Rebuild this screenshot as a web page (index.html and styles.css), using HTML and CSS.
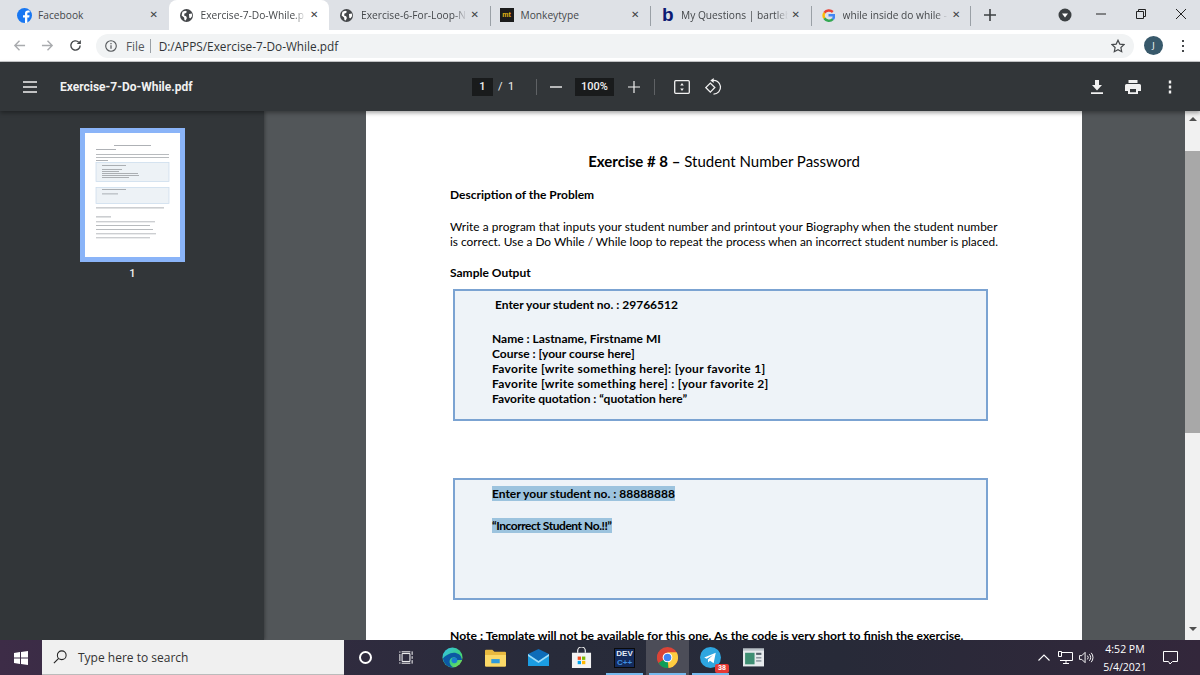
FILE: index.html
```html
<!DOCTYPE html>
<html lang="en">
<head>
  <meta charset="UTF-8">
  <title>Exercise-7-Do-While.pdf</title>
  <link rel="stylesheet" href="styles.css">
</head>
<body>
  <div class="tabstrip">
    <div class="tab">
      <svg class="fav fav-fb" viewBox="0 0 16 16"><circle cx="8" cy="8" r="8" fill="#1877f2"/><path d="M11 16V10h2l.4-2.4H11V6.200c0-.8.3-1.300 1.300-1.300h1.200V2.800c-.5-.1-1.200-.2-1.900-.2-1.900 0-3.100 1.100-3.100 3.200v1.800H6.400V10h2.100v6z" fill="#fff"/></svg>
      <span class="tab-title tab-title-full">Facebook</span>
      <span class="tab-x">&#10005;</span>
    </div>
    <div class="tab tab-active">
      <svg class="fav" viewBox="0 0 16 16"><use href="#globe"/></svg>
      <span class="tab-title">Exercise-7-Do-While.p</span>
      <span class="tab-x">&#10005;</span>
    </div>
    <div class="tab">
      <svg class="fav" viewBox="0 0 16 16"><use href="#globe"/></svg>
      <span class="tab-title">Exercise-6-For-Loop-N</span>
      <span class="tab-x">&#10005;</span>
    </div>
    <div class="tab tab-sep">
      <span class="fav-mt">mt</span>
      <span class="tab-title tab-title-full">Monkeytype</span>
      <span class="tab-x">&#10005;</span>
    </div>
    <div class="tab tab-sep">
      <span class="fav-b">b</span>
      <span class="tab-title">My Questions | bartleb</span>
      <span class="tab-x">&#10005;</span>
    </div>
    <div class="tab tab-sep tab-last">
      <svg class="fav" viewBox="0 0 16 16" fill="none" stroke-width="3">
        <path d="M13.300 3.700A7 6.800 0 0 0 2.900 4.600" stroke="#ea4335"/>
        <path d="M2.900 4.600a6.800 6.800 0 0 0 0 6.800" stroke="#fbbc05"/>
        <path d="M2.900 11.400a6.800 6.800 0 0 0 10.500 1.100" stroke="#34a853"/>
        <path d="M13.400 12.500A6.800 6.800 0 0 0 14.800 7.800H8" stroke="#4285f4"/>
      </svg>
      <span class="tab-title">while inside do while -</span>
      <span class="tab-x">&#10005;</span>
    </div>
    <svg class="newtab" viewBox="0 0 12 12"><path d="M6 0v12M0 6h12" stroke="#3c4043" stroke-width="1.600"/></svg>
    <svg class="tabsearch" viewBox="0 0 14 14"><circle cx="7" cy="7" r="6.500" fill="#3c4043"/><path d="M4 5.500h6L7 9.500z" fill="#fff"/></svg>
    <div class="winctl">
      <svg viewBox="0 0 10 10"><path d="M0 5h10" stroke="#222"/></svg>
      <svg viewBox="0 0 10 10" fill="none" stroke="#222"><path d="M.5 2.500h7v7h-7zM2.500 2.500v-2h7v7h-2"/></svg>
      <svg viewBox="0 0 10 10"><path d="M0 0l10 10M10 0L0 10" stroke="#222"/></svg>
    </div>
  </div>

  <div class="toolbar">
    <svg class="nav nav-off" viewBox="0 0 14 14"><path d="M13 7H2M7 2L2 7l5 5" fill="none" stroke="#a9abae" stroke-width="1.500"/></svg>
    <svg class="nav nav-off" viewBox="0 0 14 14"><path d="M1 7h11M7 2l5 5-5 5" fill="none" stroke="#a9abae" stroke-width="1.500"/></svg>
    <svg class="nav" viewBox="0 0 14 14"><path d="M12 7a5 5 0 1 1-1.500-3.600" fill="none" stroke="#45484b" stroke-width="1.500"/><path d="M12.800 1v4.500H8.300z" fill="#45484b"/></svg>
    <div class="omnibox">
      <svg class="info" viewBox="0 0 12 12"><circle cx="6" cy="6" r="5.300" fill="none" stroke="#55585b" stroke-width="1.100"/><path d="M6 5.200v3.600M6 3v1.200" stroke="#55585b" stroke-width="1.200"/></svg>
      <span class="scheme">File</span>
      <span class="url">D:/APPS/Exercise-7-Do-While.pdf</span>
      <svg class="star" viewBox="0 0 14 14"><path d="M7 1.200l1.800 3.900 4.200.5-3.100 2.900.8 4.200L7 10.700l-3.700 2 .8-4.200L1 5.600l4.200-.5z" fill="none" stroke="#45484b" stroke-width="1.200"/></svg>
    </div>
    <span class="avatar">J</span>
    <svg class="menu-dots" viewBox="0 0 4 14"><path d="M2 1v2M2 6v2M2 11v2" stroke="#45484b" stroke-width="2"/></svg>
  </div>

  <div class="pdfbar">
    <svg class="hamburger" viewBox="0 0 14 12"><path d="M0 1h14M0 6h14M0 11h14" stroke="#f1f1f1" stroke-width="1.500"/></svg>
    <span class="filename">Exercise-7-Do-While.pdf</span>
    <div class="pagectl">
      <span class="field field-page">1</span>
      <span class="pagecount">/ &nbsp;1</span>
      <span class="vsep vsep-a"></span>
      <svg class="zoom-btn zoom-minus" viewBox="0 0 12 12"><path d="M0 6h12" stroke="#f1f1f1" stroke-width="1.400"/></svg>
      <span class="field field-zoom">100%</span>
      <svg class="zoom-btn zoom-plus" viewBox="0 0 12 12"><path d="M0 6h12M6 0v12" stroke="#f1f1f1" stroke-width="1.200"/></svg>
      <span class="vsep vsep-b"></span>
      <svg class="fit" viewBox="0 0 16 14"><rect x=".7" y=".7" width="14.600" height="12.600" rx="1" fill="none" stroke="#f1f1f1" stroke-width="1.300"/><path d="M8 3l1.800 2.500H6.200zM8 11L6.200 8.500h3.600z" fill="#f1f1f1"/></svg>
      <svg class="rotate" viewBox="0 0 16 16"><rect x="2" y="6" width="6" height="6" transform="rotate(45 5 9)" fill="none" stroke="#f1f1f1" stroke-width="1.200"/><path d="M6.500 2.400a6.500 6.500 0 1 1 1.500 12.800" fill="none" stroke="#f1f1f1" stroke-width="1.200"/><path d="M8.200 0v4.800L5 2.400z" fill="#f1f1f1"/></svg>
    </div>
    <div class="pdfactions">
      <svg viewBox="0 0 12 14"><path d="M4 0h4v5h3L6 10.500 1 5h3zM0 12.300h12V14H0z" fill="#f1f1f1"/></svg>
      <svg viewBox="0 0 16 14"><path d="M3.500 0h9v3h-9zM1.500 4h13A1.500 1.500 0 0 1 16 5.500V11h-3v3H3v-3H0V5.500A1.500 1.500 0 0 1 1.500 4zM5 9v3.200h6V9z" fill="#f1f1f1"/></svg>
      <svg viewBox="0 0 4 14"><path d="M2 .5v3M2 5.500v3M2 10.500v3" stroke="#f1f1f1" stroke-width="2.400"/></svg>
    </div>
  </div>

  <div class="viewer">
    <aside class="sidebar">
      <div class="thumb">
        <svg viewBox="0 0 95 123">
          <rect x="11" y="29" width="73" height="19" fill="#edf2f6" stroke="#c8daec" stroke-width=".7"/>
          <rect x="11" y="54" width="73" height="16" fill="#edf2f6" stroke="#c8daec" stroke-width=".7"/>
          <g fill="#9a9ea3">
            <rect x="29" y="11.700" width="37" height=".8"/>
            <rect x="11" y="15.700" width="20" height=".8"/>
            <rect x="11" y="20.700" width="73" height=".7"/>
            <rect x="11" y="23.700" width="73" height=".7"/>
            <rect x="11" y="26.700" width="12" height=".8"/>
            <rect x="17" y="31.700" width="24" height=".8"/>
            <rect x="17" y="35.500" width="20" height=".8"/>
            <rect x="17" y="37.500" width="17" height=".8"/>
            <rect x="17" y="39.500" width="36" height=".8"/>
            <rect x="17" y="41.500" width="37" height=".8"/>
            <rect x="17" y="43.500" width="27" height=".8"/>
            <rect x="17" y="55.700" width="24" height=".8"/>
            <rect x="17" y="60" width="16" height=".8"/>
            <rect x="11" y="74" width="68" height=".8"/>
            <rect x="11" y="83" width="15" height=".8"/>
            <rect x="11" y="88" width="59" height=".7"/>
            <rect x="11" y="91.500" width="54" height=".7"/>
            <rect x="11" y="95.500" width="57" height=".7"/>
            <rect x="11" y="100" width="60" height=".7"/>
            <rect x="11" y="104" width="54" height=".7"/>
          </g>
        </svg>
      </div>
      <span class="thumb-num">1</span>
    </aside>

    <main class="stage">
      <div class="page">
        <h1 class="doc-title"><b>Exercise # 8 &ndash;</b> Student Number Password</h1>
        <h2 class="doc-head doc-head-first">Description of the Problem</h2>
        <p class="doc-para"><span class="para-first">Write a program that inputs your student number and printout your Biography when the student number</span><br>is correct. Use a Do While / While loop to repeat the process when an incorrect student number is placed.</p>
        <h2 class="doc-head doc-head-sample">Sample Output</h2>
        <div class="console console-ok">
          <p class="prompt">Enter your student no. : 29766512</p>
          <p class="bio">Name : Lastname, Firstname MI<br>Course : [your course here]<br><span class="wide">Favorite [write something here]: [your favorite 1]</span><br><span class="wide">Favorite [write something here] : [your favorite 2]</span><br>Favorite quotation : &ldquo;quotation here&rdquo;</p>
        </div>
        <div class="console console-bad">
          <p class="prompt-bad"><span class="sel">Enter your student no. : 88888888</span></p>
          <p class="wrong"><span class="sel">&ldquo;Incorrect Student No.!!&rdquo;</span></p>
        </div>
        <p class="doc-note">Note : Template will not be available for this one. As the code is very short to finish the exercise.</p>
      </div>
    </main>

    <div class="scrollbar">
      <span class="arrow-up"></span>
      <span class="scroll-thumb"></span>
      <span class="arrow-down"></span>
    </div>
  </div>

  <div class="taskbar">
    <svg class="startlogo" viewBox="0 0 14 14"><path d="M0 2l6-.9V6.600H0zM7 1l7-1v6.600H7zM0 7.400h6V13l-6-.9zM7 7.400h7V14l-7-1z" fill="#fff"/></svg>
    <div class="searchbox">
      <svg viewBox="0 0 16 16"><circle cx="10" cy="6" r="5" fill="none" stroke="#222" stroke-width="1.200"/><path d="M6.500 9.500L1 15" stroke="#222" stroke-width="1.300"/></svg>
      <span>Type here to search</span>
    </div>
    <span class="cortana"></span>
    <svg class="taskview" viewBox="0 0 16 14"><path d="M3.500 2.500h9v9h-9zM1 0v1.500M1 3v8M1 12.500V14M15 0v4M15 5.500v3M15 10v4M3 .5h10M3 13.500h10" fill="none" stroke="#fff" stroke-width="1.100"/></svg>
    <div class="apps">
      <div class="app">
        <svg viewBox="0 0 22 22"><defs><linearGradient id="edgeg" x1="0" y1="0" x2="1" y2="1"><stop offset="0" stop-color="#35c1f1"/><stop offset=".6" stop-color="#3bd07e"/><stop offset="1" stop-color="#8ee04a"/></linearGradient></defs><circle cx="11" cy="11" r="10.500" fill="url(#edgeg)"/><path d="M1 12C2 19 8 22 13 21.500 8.500 20 7 16 8.500 13c1.500-3 7-3.500 7 .5h5.500C20 6 13 5 9 6.500 5 8 2.500 10 1 12z" fill="#0c59a4"/><circle cx="13" cy="14" r="3" fill="#1a7fd0"/></svg>
      </div>
      <div class="app">
        <svg viewBox="0 0 20 17"><path d="M0 2a1 1 0 0 1 1-1h6l2 2h10a1 1 0 0 1 1 1v12a1 1 0 0 1-1 1H1a1 1 0 0 1-1-1z" fill="#e8b93f"/><path d="M0 6h20v10a1 1 0 0 1-1 1H1a1 1 0 0 1-1-1z" fill="#fbd968"/><rect x="6" y="10" width="8" height="4" fill="#2f9bdc"/></svg>
      </div>
      <div class="app">
        <svg viewBox="0 0 21 17"><path d="M0 5h21v12H0z" fill="#1b9de2"/><path d="M0 5l10.500-5L21 5l-10.500 7z" fill="#0e6cb8"/><path d="M0 5l10.500 7L21 5v2l-10.500 7L0 7z" fill="#9fdcf8"/></svg>
      </div>
      <div class="app">
        <svg viewBox="0 0 20 22"><path d="M6 6V4a4 4 0 0 1 8 0v2" fill="none" stroke="#eee" stroke-width="1.300"/><path d="M0 6h20v16H0z" fill="#f3f3f3"/><path d="M6 10h3.500v3.500H6z" fill="#f25022"/><path d="M10.500 10H14v3.500h-3.500z" fill="#7fba00"/><path d="M6 14.500h3.500V18H6z" fill="#00a4ef"/><path d="M10.500 14.500H14V18h-3.500z" fill="#ffb900"/></svg>
      </div>
      <div class="app app-dev"><span class="dev-logo">DEV<br><i>C++</i></span></div>
      <div class="app app-active">
        <svg viewBox="0 0 20 20"><circle cx="10" cy="10" r="10" fill="#db4437"/><path d="M10 10L1.300 15a10 10 0 0 0 9.700 4.900z" fill="#0f9d58"/><path d="M10 10l1 10a10 10 0 0 0 7.700-15H10z" fill="#ffcd40"/><path d="M1.300 15A10 10 0 0 1 1.700 4.500L10 10z" fill="#db4437"/><circle cx="10" cy="10" r="4.600" fill="#fff"/><circle cx="10" cy="10" r="3.600" fill="#4285f4"/></svg>
      </div>
      <div class="app app-tg">
        <svg viewBox="0 0 20 20"><circle cx="10" cy="10" r="10" fill="#2ea6e0"/><path d="M4 10l11-4.500-2 10-3.500-2.500-1.800 1.800-.2-3 5-4.300-6.200 3.800z" fill="#fff"/></svg>
        <span class="badge">38</span>
      </div>
      <div class="app">
        <svg viewBox="0 0 20 17"><rect width="20" height="17" fill="#e6eaec"/><rect y="0" width="20" height="2" fill="#b9c2c8"/><rect x="2" y="4" width="9" height="11" fill="#3f8f73"/><rect x="12.500" y="4" width="5" height="2" fill="#55626b"/><rect x="12.500" y="8" width="5" height="1.500" fill="#8f9aa2"/><rect x="12.500" y="11" width="5" height="1.500" fill="#8f9aa2"/></svg>
      </div>
    </div>
    <div class="tray">
      <svg class="tray-chev" viewBox="0 0 12 7"><path d="M.5 6.500L6 1l5.500 5.500" fill="none" stroke="#fff" stroke-width="1.100"/></svg>
      <svg class="tray-net" viewBox="0 0 15 13"><path d="M4 1.500h10.500v8H2M8 9.500V12.500M5 12.500h6M.5.500h3v5h-3z" fill="none" stroke="#fff"/></svg>
      <svg class="tray-vol" viewBox="0 0 16 13"><path d="M.5 4.500h2.500L6.500 1v11L3 8.500H.5z" fill="none" stroke="#fff"/><path d="M9 4.500a3 3 0 0 1 0 4M11 3a5 5 0 0 1 0 7M13 1.500a7.500 7.500 0 0 1 0 10" fill="none" stroke="#fff"/></svg>
      <div class="clock">4:52 PM<br>5/4/2021</div>
      <svg class="tray-note" viewBox="0 0 15 14"><path d="M.5.500h14v10H9.500L7 13l-1.500-2.500h-5z" fill="none" stroke="#fff"/></svg>
    </div>
  </div>

  <svg class="defs" width="0" height="0">
    <symbol id="globe" viewBox="0 0 16 16">
      <circle cx="8" cy="8" r="8" fill="#45484b"/>
      <path d="M3 3.500l3.500-1.500 2 1-1 2-2 .5-.5 2.500 2.500 1 1 2-1.500 3-1.500-.5-.5-3L2 8zM11 6l3.500-.5.500 3-2 3-1.500-.5z" fill="#fff"/>
    </symbol>
  </svg>
</body>
</html>
```

FILE: styles.css
```css
* {
  box-sizing: border-box;
}
html, body {
  margin: 0;
  height: 675px;
  overflow: hidden;
}
body {
  font-family: "Open Sans", Arial, sans-serif;
  display: flex;
  flex-direction: column;
  background: #323639;
}
svg {
  flex: none;
  display: block;
}
.defs {
  position: absolute;
}

/* tabs */
.tabstrip {
  height: 30px;
  background: #dee1e6;
  display: flex;
  align-items: center;
  padding-left: 8px;
}
.tab {
  width: 160.5px;
  height: 30px;
  display: flex;
  align-items: center;
  padding: 0 9px;
  font-size: 10.2px;
  color: #45484b;
  position: relative;
}
.tab-active {
  background: #fff;
  border-radius: 8px 8px 0 0;
}
.tab-sep::before {
  content: "";
  position: absolute;
  left: 0;
  top: 6px;
  height: 20px;
  width: 1px;
  background: #9aa0a6;
}
.tab-last::after {
  content: "";
  position: absolute;
  right: 0;
  top: 6px;
  height: 20px;
  width: 1px;
  background: #9aa0a6;
}
.fav {
  width: 13px;
  height: 13px;
  margin-right: 8px;
  margin-left: 2px;
}
.fav-fb {
  width: 15px;
  height: 15px;
  margin-left: 0;
  margin-right: 6px;
}
.fav-mt {
  width: 14px;
  height: 14px;
  margin-left: 1px;
  margin-right: 7px;
  background: #1c1c1c;
  color: #e2b714;
  font: bold 7px/14px "Liberation Sans", sans-serif;
  text-align: center;
  flex: none;
}
.fav-b {
  width: 12px;
  margin-left: 3px;
  margin-right: 7px;
  color: #0c1a73;
  font: bold 19px/20px "Liberation Sans", sans-serif;
  flex: none;
}
.tab-title {
  flex: 1;
  min-width: 0;
  white-space: nowrap;
  -webkit-mask-image: linear-gradient(to right, #000 88%, transparent 100%);
  mask-image: linear-gradient(to right, #000 88%, transparent 100%);
}
.tab-title-full {
  -webkit-mask-image: none;
  mask-image: none;
}
.tab-x {
  width: 10px;
  margin-left: 4px;
  font: bold 10px/10px "DejaVu Sans", sans-serif;
  color: #3c4043;
  flex: none;
}
.newtab {
  width: 12px;
  height: 12px;
  margin-left: 13px;
}
.tabsearch {
  width: 14px;
  height: 14px;
  margin-left: 62px;
}
.winctl {
  display: flex;
  gap: 30px;
  margin-left: 24px;
  margin-top: -2px;
}
.winctl svg {
  width: 10px;
  height: 10px;
}

/* address bar */
.toolbar {
  height: 32px;
  background: #fff;
  display: flex;
  align-items: center;
  padding-left: 13px;
  border-bottom: 1px solid #c8c9cb;
}
.nav {
  width: 13px;
  height: 13px;
  margin-right: 15px;
}
.omnibox {
  width: 1038px;
  height: 24px;
  margin-left: -1px;
  border-radius: 12px;
  background: #f1f3f4;
  display: flex;
  align-items: center;
  padding-left: 9px;
  font-size: 11.8px;
  color: #303336;
}
.info {
  width: 12px;
  height: 12px;
  margin-right: 9px;
}
.scheme {
  color: #55585b;
  padding-right: 5px;
  margin-right: 8px;
  border-right: 1px solid #9aa0a6;
  line-height: 14px;
}
.url {
  flex: 1;
}
.star {
  width: 14px;
  height: 14px;
  margin-right: 9px;
}
.avatar {
  width: 19px;
  height: 19px;
  margin-left: 10px;
  border-radius: 50%;
  background: #38596b;
  color: #fff;
  font-size: 9px;
  line-height: 19px;
  text-align: center;
}
.menu-dots {
  width: 4px;
  height: 14px;
  margin-left: 18px;
}

/* pdf toolbar */
.pdfbar {
  height: 49px;
  background: #323639;
  display: flex;
  align-items: center;
  padding-left: 23px;
  color: #f1f1f1;
  font-family: Roboto, Arial, sans-serif;
  box-shadow: 0 2px 4px rgba(0, 0, 0, 0.35);
  position: relative;
  z-index: 2;
}
.hamburger {
  width: 14px;
  height: 12px;
  margin-right: 23px;
}
.filename {
  width: 412px;
  font-size: 12px;
  font-weight: 700;
}
.pagectl {
  display: flex;
  align-items: center;
  font-size: 11px;
}
.field {
  height: 18px;
  line-height: 18px;
  text-align: center;
  background: #191b1c;
  font-weight: 500;
}
.field-page {
  width: 21px;
}
.field-zoom {
  width: 39px;
}
.pagecount {
  margin-left: 5px;
  width: 20px;
  white-space: nowrap;
}
.vsep {
  width: 1px;
  height: 16px;
  background: #5f6265;
}
.vsep-a {
  margin-left: 18px;
}
.vsep-b {
  margin-left: 14px;
}
.zoom-btn {
  width: 12px;
  height: 12px;
}
.zoom-minus {
  margin: 0 13px;
}
.zoom-plus {
  margin-left: 14px;
}
.fit {
  width: 16px;
  height: 14px;
  margin-left: 19px;
}
.rotate {
  width: 17px;
  height: 17px;
  margin-left: 15px;
}
.pdfactions {
  display: flex;
  align-items: center;
  margin-left: auto;
  margin-right: 28px;
}
.pdfactions svg {
  height: 14px;
  width: 12px;
}
.pdfactions svg:nth-child(2) {
  width: 16px;
  margin: 0 27px 0 22px;
}
.pdfactions svg:nth-child(3) {
  width: 4px;
}

/* viewer */
.viewer {
  height: 529px;
  display: flex;
  overflow: hidden;
}
.sidebar {
  width: 264px;
  background: #323639;
  padding: 17px 0 0 80px;
  box-shadow: 1px 0 3px rgba(0, 0, 0, 0.3);
  z-index: 1;
}
.thumb {
  width: 105px;
  height: 134px;
  border: 5px solid #8ab4f8;
  background: #fff;
}
.thumb svg {
  width: 95px;
  height: 124px;
}
.thumb-num {
  display: block;
  width: 105px;
  margin-top: 5px;
  text-align: center;
  color: #f1f1f1;
  font: 500 11px/14px Roboto, Arial, sans-serif;
}
.stage {
  flex: 1;
  background: #525659;
  display: flex;
  justify-content: center;
  overflow: hidden;
}
.scrollbar {
  width: 15px;
  background: #f1f1f1;
  display: flex;
  flex-direction: column;
  align-items: center;
}
.arrow-up, .arrow-down {
  width: 0;
  height: 0;
  border-left: 4px solid transparent;
  border-right: 4px solid transparent;
}
.arrow-up {
  margin-top: 6px;
  border-bottom: 4px solid #505050;
}
.arrow-down {
  margin-top: 194px;
  border-top: 4px solid #505050;
}
.scroll-thumb {
  width: 15px;
  height: 282px;
  margin-top: 30px;
  background: #a8a8a8;
}

/* pdf page */
.page {
  width: 716px;
  height: 560px;
  flex: none;
  margin-left: -1px;
  background: #fff;
  color: #000;
  padding: 41px 84px 0;
  font-family: Lato, "Liberation Sans", sans-serif;
  font-size: 12px;
}
.doc-title {
  margin: 0;
  font-size: 15px;
  line-height: 18px;
  font-weight: 400;
  text-align: center;
}
.doc-head {
  margin: 0;
  font-size: 12px;
  line-height: 15px;
  font-weight: 700;
}
.doc-head-first {
  margin-top: 17px;
}
.doc-head-sample {
  margin-top: 16px;
}
.doc-para {
  margin: 17px 0 0;
  line-height: 15px;
  font-size: 11.85px;
  white-space: nowrap;
}
.para-first {
  letter-spacing: 0.06px;
}
.console {
  margin-left: 3px;
  width: 535px;
  background: #eef3f8;
  border: 2px solid #7ba3d2;
  font-weight: 700;
  white-space: nowrap;
  line-height: 15px;
}
.console-ok {
  height: 132px;
  margin-top: 9px;
  padding: 6px 0 0 37px;
}
.console-bad {
  height: 122px;
  margin-top: 57px;
  padding: 6px 0 0 37px;
}
.console p {
  margin: 0;
}
.prompt {
  padding-left: 3px;
}
.console .bio {
  margin-top: 19px;
}
.wide {
  letter-spacing: 0.3px;
}
.console .wrong {
  margin-top: 17px;
  letter-spacing: -0.45px;
}
.sel {
  background: #9cc3de;
}
.doc-note {
  margin: 28px 0 0;
  font-size: 12.15px;
  font-weight: 700;
  white-space: nowrap;
  line-height: 15px;
}

/* taskbar */
.taskbar {
  height: 35px;
  background: linear-gradient(to right, #3d2c47 0%, #282b3a 45%, #272a38 70%, #33273b 100%);
  display: flex;
  align-items: center;
  position: relative;
  z-index: 3;
}
.startlogo {
  width: 14px;
  height: 14px;
  margin-left: 14px;
}
.searchbox {
  width: 302px;
  height: 35px;
  margin-left: 14px;
  background: #f0f0f0;
  border-bottom: 1px solid #bbb;
  display: flex;
  align-items: center;
  padding-left: 11px;
  gap: 11px;
  font-size: 12px;
  color: #333;
}
.searchbox svg {
  width: 14px;
  height: 14px;
}
.cortana {
  width: 13px;
  height: 13px;
  margin-left: 15px;
  border: 2px solid #fff;
  border-radius: 50%;
  flex: none;
}
.taskview {
  width: 14px;
  height: 13px;
  margin-left: 27px;
}
.apps {
  display: flex;
  margin-left: 18px;
}
.app {
  width: 43px;
  height: 35px;
  display: flex;
  align-items: center;
  justify-content: center;
  position: relative;
}
.app svg {
  width: 21px;
  height: 21px;
}
.app-dev::after, .app-active::after, .app-tg::after {
  content: "";
  position: absolute;
  left: 3px;
  right: 3px;
  bottom: 0;
  height: 2px;
  background: #76b9ed;
}
.app-active {
  background: #4c4d58;
}
.dev-logo {
  width: 21px;
  height: 20px;
  background: #142b5c;
  border: 1px solid #0a0a0a;
  color: #e3ecf8;
  font: bold 8px/9px "Liberation Sans", sans-serif;
  text-align: center;
}
.dev-logo i {
  color: #3f8fe0;
  font-style: normal;
}
.badge {
  position: absolute;
  right: 3px;
  bottom: 2px;
  width: 14px;
  height: 9px;
  border-radius: 2px;
  background: #e53935;
  color: #fff;
  font: bold 7px/9px Roboto, sans-serif;
  text-align: center;
}
.tray {
  margin-left: auto;
  display: flex;
  align-items: center;
  color: #fff;
}
.tray-chev {
  width: 12px;
  height: 7px;
  margin-right: 8px;
}
.tray-net {
  width: 15px;
  height: 13px;
  margin-right: 6px;
}
.tray-vol {
  width: 15px;
  height: 13px;
}
.clock {
  width: 52px;
  margin: 0 12px 0 5px;
  font-size: 10.5px;
  line-height: 18px;
  text-align: center;
}
.tray-note {
  width: 15px;
  height: 14px;
  margin-right: 22px;
}
```
